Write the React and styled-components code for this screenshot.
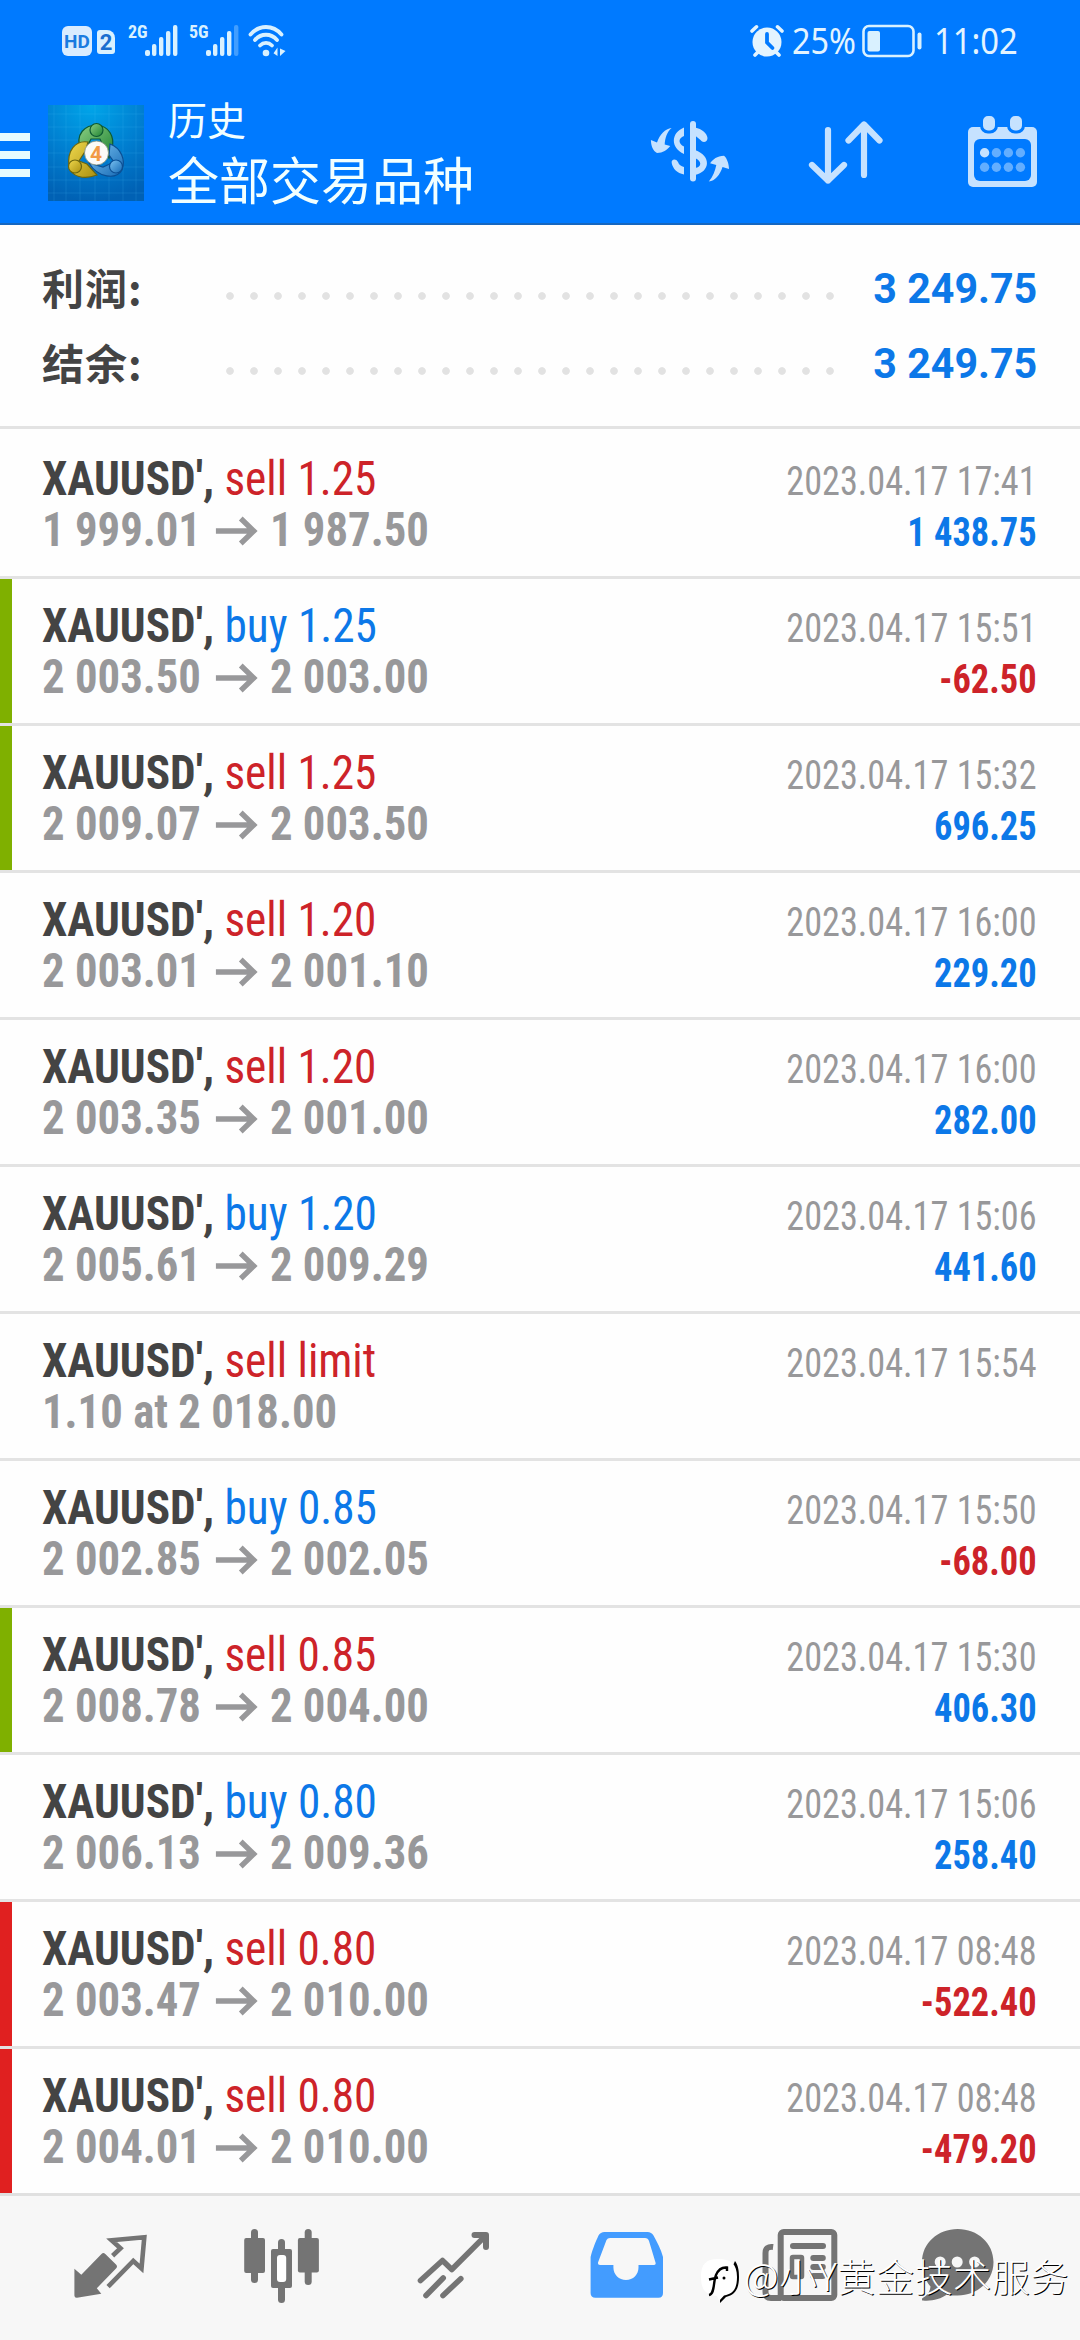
import React, { Fragment } from "react"
import styled, { createGlobalStyle } from "styled-components"

const blue = "#0c78e8"
const red = "#cd2329"

const deals = [
  { side: "sell", size: "1.25", from: "1 999.01", to: "1 987.50", time: "2023.04.17 17:41", profit: "1 438.75" },
  { side: "buy", size: "1.25", from: "2 003.50", to: "2 003.00", time: "2023.04.17 15:51", profit: "-62.50", mark: "#7fb000" },
  { side: "sell", size: "1.25", from: "2 009.07", to: "2 003.50", time: "2023.04.17 15:32", profit: "696.25", mark: "#7fb000" },
  { side: "sell", size: "1.20", from: "2 003.01", to: "2 001.10", time: "2023.04.17 16:00", profit: "229.20" },
  { side: "sell", size: "1.20", from: "2 003.35", to: "2 001.00", time: "2023.04.17 16:00", profit: "282.00" },
  { side: "buy", size: "1.20", from: "2 005.61", to: "2 009.29", time: "2023.04.17 15:06", profit: "441.60" },
  { side: "sell", size: "limit", order: "1.10 at 2 018.00", time: "2023.04.17 15:54" },
  { side: "buy", size: "0.85", from: "2 002.85", to: "2 002.05", time: "2023.04.17 15:50", profit: "-68.00" },
  { side: "sell", size: "0.85", from: "2 008.78", to: "2 004.00", time: "2023.04.17 15:30", profit: "406.30", mark: "#7fb000" },
  { side: "buy", size: "0.80", from: "2 006.13", to: "2 009.36", time: "2023.04.17 15:06", profit: "258.40" },
  { side: "sell", size: "0.80", from: "2 003.47", to: "2 010.00", time: "2023.04.17 08:48", profit: "-522.40", mark: "#e02020" },
  { side: "sell", size: "0.80", from: "2 004.01", to: "2 010.00", time: "2023.04.17 08:48", profit: "-479.20", mark: "#e02020" },
]

const totals = [
  { label: "利润:", value: "3 249.75" },
  { label: "结余:", value: "3 249.75" },
]

const SignalBars = ({ weak }) => (
  <svg width="34" height="32" viewBox="0 0 34 32" fill="#d9f1ff">
    <rect x="0" y="25" width="5" height="6" rx="2" />
    <rect x="7" y="19" width="4.4" height="12" rx="2" />
    <rect x="14" y="12" width="4.4" height="19" rx="2" />
    <rect x="21" y="6" width="4.4" height="25" rx="2" />
    <rect x="28" y="0" width="4.4" height="31" rx="2" opacity={weak ? 0.3 : 1} />
  </svg>
)

const WifiIcon = () => (
  <svg width="40" height="32" viewBox="0 0 40 32" fill="none" stroke="#d9f1ff" strokeWidth="3.8" strokeLinecap="round">
    <path d="M2.5 9.5C11-.5 25-.5 33.5 9.5" />
    <path d="M7 15C13 8 23 8 29 15" />
    <path d="M12 20.500C15.500 17 20.500 17 24 20.500" />
    <circle cx="18" cy="28" r="3.3" fill="#d9f1ff" stroke="none" />
    <path d="M29.500 22.500V31L25.500 28.200zM32 31V23.500L37.500 26z" fill="#d9f1ff" stroke="none" />
  </svg>
)

const AlarmIcon = () => (
  <svg width="34" height="34" viewBox="0 0 34 34" fill="none" strokeLinecap="round">
    <circle cx="17" cy="18" r="14.500" fill="#e3f4ff" />
    <path d="M2 7L6.500 2.800M32 7L27.500 2.800M5 31L8 28M29 31L26 28" stroke="#e3f4ff" strokeWidth="3.600" />
    <path d="M17 10V18.500L22.500 24" stroke="#007aff" strokeWidth="3.800" />
  </svg>
)

const BatteryIcon = () => (
  <svg width="60" height="34" viewBox="0 0 60 34" fill="#d9f1ff">
    <rect x="1.500" y="2" width="50" height="30" rx="5.500" fill="none" stroke="#d9f1ff" strokeWidth="2.600" />
    <rect x="5.500" y="7" width="12.500" height="20.500" rx="2" />
    <rect x="55.500" y="8.500" width="4" height="17" rx="2" />
  </svg>
)

// MetaTrader style badge: three little figures round a numbered disc
const AppLogo = () => (
  <Logo width="96" height="96" viewBox="0 0 96 96">
    <defs>
      <radialGradient id="sky" cx="0.450" cy="0" r="1">
        <stop offset="0" stopColor="#00a6ea" />
        <stop offset="0.550" stopColor="#007ed0" />
        <stop offset="1" stopColor="#0061b4" />
      </radialGradient>
      <linearGradient id="green" x1="0" y1="0" x2="1" y2="1">
        <stop offset="0" stopColor="#8ccf83" />
        <stop offset="1" stopColor="#1d8232" />
      </linearGradient>
      <linearGradient id="gold" x1="0" y1="0" x2="1" y2="1">
        <stop offset="0" stopColor="#f0d94e" />
        <stop offset="1" stopColor="#a98f10" />
      </linearGradient>
      <linearGradient id="water" x1="0" y1="0" x2="1" y2="1">
        <stop offset="0" stopColor="#7cc4f2" />
        <stop offset="1" stopColor="#1468b4" />
      </linearGradient>
    </defs>
    <rect width="96" height="96" fill="url(#sky)" />
    <path
      d="M6 0V96M18 0V96M32 0V96M47 0V96M61 0V96M75 0V96M88 0V96M0 9H96M0 22H96M0 35H96M0 48H96M0 62H96M0 75H96M0 88H96"
      stroke="#5ac8ff"
      strokeOpacity="0.150"
    />
    <g strokeWidth="1.200">
      <path d="M33 46C26 28 38 20 49 20C61 21 67 32 64 43L61 53L52 34H43L36 47z" fill="url(#green)" stroke="#0e5a33" />
      <path d="M40 37C27 35 19 46 21 61C23 72 36 75 49 70L39 59L31 56L38 45z" fill="url(#gold)" stroke="#69650f" />
      <path d="M62 39C73 43 78 55 74 65C68 75 50 73 41 58L55 62L66 57L61 50z" fill="url(#water)" stroke="#0b4f94" />
      <circle cx="48.500" cy="25" r="6.500" fill="url(#green)" stroke="#0e5a33" />
      <circle cx="27" cy="61.500" r="6.500" fill="url(#gold)" stroke="#69650f" />
      <circle cx="68" cy="61.500" r="6.500" fill="url(#water)" stroke="#0b4f94" />
      <circle cx="48.500" cy="48" r="12" fill="#fbfbf8" stroke="#7e8d7a" strokeWidth="0.800" />
    </g>
    <text x="48" y="55.500" fontFamily="Roboto, sans-serif" fontWeight="700" fontSize="21" fill="#f29a45" textAnchor="middle">
      4
    </text>
  </Logo>
)

const CurrencyIcon = () => (
  <svg width="90" height="90" viewBox="0 0 90 90" fill="#c6e2ff">
    <rect x="45" y="14" width="6" height="60.500" rx="3" />
    <path d="M39 20.500V29C33 31 33 37 39 39.500V47C25.500 41 25.500 26 39 20.500z" />
    <path d="M50 20.500C57 22 62 26 62.500 31C62.500 35.500 57.500 36 55.500 33L50 28.500z" />
    <path d="M50 43C67 49 65 65 50 68V61C57 60 57 54 50 51z" />
    <path d="M26.700 56C26 52 31 51 33 55C34 58 36 59 39 60V67.500C32 66 28 62 26.700 56z" />
    <path d="M26.600 21C22 25 20 31 19.700 37.500L25.200 39C22 43 18 46 12 46C8 44 6 39 5.900 33L12 35.500C15 27 20 22 26.600 21z" />
    <path d="M63.800 74.500C68 70 70 64 71.300 58L65.100 56.300C68 52 72 49 79 48.700C82 51 84 57 84 62L77.500 60C75 68 70 74 63.800 74.500z" />
  </svg>
)

const SortIcon = () => (
  <svg width="90" height="90" viewBox="0 0 90 90" fill="none" stroke="#c6e2ff" strokeWidth="6.200" strokeLinecap="round" strokeLinejoin="round">
    <path d="M27 23V73.500M11 58L27 73.500L43 58" />
    <path d="M63 68V17.500M47.500 33.500L63 17.500L78.500 33.500" />
  </svg>
)

const CalendarIcon = () => (
  <svg width="90" height="90" viewBox="0 0 90 90" fill="#c6e2ff">
    <rect x="11" y="20" width="69" height="60" rx="5" />
    <rect x="17" y="32" width="57" height="42" rx="6" fill="#007aff" />
    <rect x="24.500" y="7.500" width="15" height="17.500" rx="6.500" stroke="#007aff" strokeWidth="3" />
    <rect x="51.500" y="7.500" width="15" height="17.500" rx="6.500" stroke="#007aff" strokeWidth="3" />
    {[45.7, 60.3].map(cy =>
      [27.6, 39.4, 51.4, 63.4].map((cx, i) => (
        <circle key={`${cx}-${cy}`} cx={cx} cy={cy} r="4.700" opacity={i === 0 && cy < 50 ? 1 : 0.5} />
      ))
    )}
  </svg>
)

const ArrowIcon = () => (
  <Arrow width="46" height="30" viewBox="0 0 43 30" preserveAspectRatio="none" fill="none" stroke="#98989a" strokeWidth="5.400">
    <path d="M0.500 15H38M25.500 2.500L38.500 15L25.500 27.500" />
  </Arrow>
)

const QuotesIcon = () => (
  <svg width="96" height="96" viewBox="0 0 96 96">
    <path
      d="M12.400 48.700L19.300 54.700L39.500 34Q41.300 32 43.300 34L54 44.500Q56 46.500 54 48.500L34.800 68.300L39.300 73.700L15 77.800Q12.400 78 12.400 75.500z"
      fill="#747474"
    />
    <path
      d="M50.600 35.700L58.500 28.300L49.600 20.300L82.300 17.300L79.500 48.500L71.300 41L46.100 66.700"
      fill="none"
      stroke="#747474"
      strokeWidth="4.600"
    />
  </svg>
)

const ChartIcon = () => (
  <svg width="96" height="96" viewBox="0 0 96 96" fill="#747474">
    <rect x="17" y="9" width="7" height="54" rx="3.500" />
    <rect x="10.200" y="18" width="20.800" height="35" rx="2" />
    <rect x="44" y="19" width="7" height="64" rx="3.500" />
    <rect x="37" y="29" width="21" height="39" rx="2" />
    <rect x="43" y="35" width="9.200" height="27" rx="3" fill="#fff" />
    <rect x="70.700" y="9" width="7" height="56" rx="3.500" />
    <rect x="63.900" y="18" width="21" height="34.500" rx="2" />
  </svg>
)

const TradeIcon = () => (
  <svg width="96" height="96" viewBox="0 0 96 96" fill="none" stroke="#747474" strokeWidth="5.600" strokeLinecap="round" strokeLinejoin="round">
    <path d="M14.500 60.500L36.500 40.500L45.800 49.500L79.500 15.700" />
    <path d="M68.500 15H80V27" strokeWidth="6" />
    <path d="M37.200 58L20 75.500M54.800 58.700L37 75.500" />
  </svg>
)

const HistoryIcon = () => (
  <svg width="96" height="96" viewBox="0 0 96 96">
    <path
      fill="#439cff"
      fillRule="evenodd"
      d="M12.600 37C14.500 29 18 21 20.500 15.500Q22.500 12 26.500 12H69.500Q73.500 12 75.500 15.500C79 22 83 29 85 37V73Q85 77.800 80.500 77.800H17.500Q12.600 77.800 12.600 73z
        M32 18Q29.500 18 28.500 20L20 42.500Q19.500 45 22 45H35.400V47.500C35.400 54.500 41 60 48 60C55 60 60.500 54.500 60.500 47.500V45H75.500Q78.300 45 77.500 42.500L71 21Q70 18 67 18z"
    />
  </svg>
)

const NewsIcon = () => (
  <svg width="96" height="96" viewBox="0 0 96 96" fill="#747474">
    <rect x="30.700" y="12" width="53.600" height="66" rx="3" fill="none" stroke="#747474" strokeWidth="6" />
    <path d="M23.100 27Q15.500 26 15.500 33V72Q15.500 78 21 78H31" fill="none" stroke="#747474" strokeWidth="6" />
    <rect x="40" y="23" width="36" height="6" rx="3" />
    <rect x="42" y="37" width="10" height="20" rx="1" fill="none" stroke="#747474" strokeWidth="4.500" />
    <rect x="60.300" y="35" width="15.500" height="6" rx="3" />
    <rect x="60.300" y="44" width="15.500" height="6" rx="3" />
    <rect x="60.300" y="53" width="15.500" height="6" rx="3" />
  </svg>
)

const ChatIcon = () => (
  <svg width="96" height="96" viewBox="0 0 96 96" fill="#747474">
    <path d="M35.700 9C55.500 9 71.500 23 71.500 42C71.500 61 55.500 75.500 35.700 75.500C31 75.500 28 75.500 25 74.500C19 79 9 81.500 1 80.500C-1.500 80 0 78.500 1.500 77.500C6 75 8 71 8.500 66.500C3 60 0 51 0 42C0 23 16 9 35.700 9z" />
    <g fill="#f7f7f7">
      <circle cx="18.200" cy="42" r="5.500" />
      <circle cx="35.200" cy="42" r="5.500" />
      <circle cx="52.600" cy="42" r="5.500" />
    </g>
  </svg>
)

const tabs = [QuotesIcon, ChartIcon, TradeIcon, HistoryIcon, NewsIcon, ChatIcon]

const App = () => (
  <Fragment>
    <GlobalStyle />
    <Screen>
      <StatusBar>
        <HdBadge>HD</HdBadge>
        <SimBadge>2</SimBadge>
        <Network>2G</Network>
        <SignalBars />
        <Network $second>5G</Network>
        <SignalBars weak />
        <WifiSlot>
          <WifiIcon />
        </WifiSlot>
        <StatusRight>
          <AlarmIcon />
          <Percent>25%</Percent>
          <BatteryIcon />
          <Clock>11:02</Clock>
        </StatusRight>
      </StatusBar>

      <AppBar>
        <MenuButton>
          <i />
          <i />
          <i />
        </MenuButton>
        <AppLogo />
        <Titles>
          <Title>历史</Title>
          <Subtitle>全部交易品种</Subtitle>
        </Titles>
        <Actions>
          <CurrencyIcon />
          <SortIcon />
          <CalendarIcon />
        </Actions>
      </AppBar>

      <Summary>
        {totals.map(t => (
          <Total key={t.label}>
            <TotalLabel>{t.label}</TotalLabel>
            <Dots />
            <TotalValue>{t.value}</TotalValue>
          </Total>
        ))}
      </Summary>

      <main>
        {deals.map((d, i) => (
          <Deal key={i}>
            <Mark $color={d.mark} />
            <Order>
              <Name>
                XAUUSD&#39;, <Side $buy={d.side === "buy"}>{d.side} {d.size}</Side>
              </Name>
              <Prices>
                {d.order || (
                  <Fragment>
                    {d.from}
                    <ArrowIcon />
                    {d.to}
                  </Fragment>
                )}
              </Prices>
            </Order>
            <Result>
              <Time>{d.time}</Time>
              {d.profit && <Profit $loss={d.profit[0] === "-"}>{d.profit}</Profit>}
            </Result>
          </Deal>
        ))}
      </main>

      <TabBar>
        {tabs.map((Icon, i) => (
          <Icon key={i} />
        ))}
        <Watermark>
          <svg width="44" height="46" viewBox="0 0 44 46">
            <path d="M35 3C38 7 39 12 39 19C39 31 35 37 26 39L20 45V37z" fill="#000" />
            <path d="M18 1C31 1 37 6 37 19C37 31 33 36 24 37.500L19 43L17 38C6 37 1 32 1 19C1 6 6 1 18 1z" fill="#fff" />
            <path d="M9 37C15 36 13 24 16 17C18.500 11 22 9 27 9.500V13M9 21.500L18 19.500" fill="none" stroke="#000" strokeWidth="2.400" />
            <circle cx="24" cy="20" r="1.500" />
          </svg>
          <span>@小Y黄金技术服务</span>
        </Watermark>
      </TabBar>
    </Screen>
  </Fragment>
)

export default App

const GlobalStyle = createGlobalStyle`
  body {
    margin: 0;
    background: #fefefe;
  }
  svg {
    display: block;
    flex: none;
  }
`
const Screen = styled.div`
  width: 1080px;
  height: 2340px;
  overflow: hidden;
  display: flex;
  flex-direction: column;
  background: #fefefe;
  font-family: "Roboto Condensed", Roboto, "Noto Sans CJK SC", sans-serif;
`
const StatusBar = styled.div`
  height: 81px;
  box-sizing: border-box;
  padding: 0 63px 0 62px;
  display: flex;
  align-items: center;
  background: #007aff;
  color: #d9f1ff;
`
const HdBadge = styled.span`
  width: 30px;
  height: 30px;
  border-radius: 6px;
  background: #d9ecff;
  color: #1a7be0;
  font: 700 19px/31px Roboto, sans-serif;
  text-align: center;
`
const SimBadge = styled.span`
  width: 18px;
  height: 24px;
  margin: 2px 13px 0 5px;
  border-radius: 3px 8px 3px 3px;
  background: #d9f1ff;
  color: #1a6fd0;
  font: 700 22px/25px Roboto, sans-serif;
  text-align: center;
`
const Network = styled.span`
  width: 17px;
  margin: 0 0 17px ${p => (p.$second ? 10 : 0)}px;
  font: 700 18px/18px "Roboto Condensed", Roboto, sans-serif;
  font-stretch: 75%;
`
const WifiSlot = styled.span`
  margin-left: 8px;
`
const StatusRight = styled.div`
  margin-left: auto;
  display: flex;
  align-items: center;
  color: #e3f4ff;
  font: 400 36px/40px "Noto Sans", sans-serif;
`
const Percent = styled.span`
  width: 70px;
  margin-left: 8px;
  transform: scaleX(0.9);
  transform-origin: left;
`
const Clock = styled.span`
  width: 83px;
  margin-left: 12px;
  transform: scaleX(0.91);
  transform-origin: left;
`
const AppBar = styled.header`
  height: 144px;
  box-sizing: border-box;
  padding-right: 33px;
  display: flex;
  align-items: center;
  background: #007aff;
  border-bottom: 2px solid #1667c0;
`
const MenuButton = styled.div`
  width: 30px;
  margin: 6px 18px 0 0;
  display: grid;
  gap: 10px;
  i {
    height: 8px;
    background: #e6fbff;
  }
`
const Logo = styled.svg`
  margin-top: 2px;
`
const Titles = styled.div`
  margin: -5px 0 0 24px;
  color: #f2ffff;
  font-family: "Noto Sans CJK SC", sans-serif;
`
const Title = styled.div`
  font-size: 39px;
  line-height: 56px;
`
const Subtitle = styled.div`
  font-size: 51px;
  line-height: 64px;
`
const Actions = styled.div`
  margin-left: auto;
  display: flex;
  gap: 66px;
`
const Summary = styled.section`
  height: 204px;
  box-sizing: border-box;
  padding: 26px 43px 0 42px;
  border-bottom: 3px solid #e3e3e3;
`
const Total = styled.div`
  height: 75px;
  display: flex;
  align-items: center;
`
const TotalLabel = styled.span`
  width: 176px;
  margin-top: -4px;
  font: 700 42px/71px "Noto Sans CJK SC", sans-serif;
  letter-spacing: 1px;
  color: #444;
`
const Dots = styled.span`
  width: 624px;
  height: 24px;
  margin-top: 15px;
  background: radial-gradient(circle at 12px 12px, #e2e2e2 3.4px, transparent 4.2px) 0 0 / 24px 24px;
`
const TotalValue = styled.span`
  margin-left: auto;
  font: 700 42px/75px Roboto, sans-serif;
  color: ${blue};
  transform: scaleX(0.98);
  transform-origin: right;
`
const Deal = styled.article`
  height: 147px;
  box-sizing: border-box;
  padding-right: 43px;
  display: flex;
  border-top: 3px solid #e3e3e3;
  font-stretch: 75%;
  white-space: nowrap;
  &:first-child {
    border-top-color: transparent;
  }
`
const Mark = styled.div`
  width: 12px;
  background: ${p => p.$color || "transparent"};
`
const Order = styled.div`
  flex: 1;
  padding: 21px 0 0 30px;
  font-size: 48px;
  line-height: 51px;
  font-weight: 700;
`
const Name = styled.div`
  color: #444;
  transform: scaleX(0.943);
  transform-origin: left;
`
const Side = styled.span`
  font-weight: 400;
  color: ${p => (p.$buy ? blue : red)};
`
const Prices = styled.div`
  display: flex;
  align-items: center;
  color: #98989a;
  transform: scaleX(0.932);
  transform-origin: left;
`
const Arrow = styled.svg`
  margin: 2px 13px 0 15px;
`
const Result = styled.div`
  padding-top: 24px;
  text-align: right;
  font-size: 40px;
  line-height: 51px;
`
const Time = styled.div`
  color: #98989a;
  transform: scaleX(0.905);
  transform-origin: right;
`
const Profit = styled.div`
  font-weight: 700;
  color: ${p => (p.$loss ? red : blue)};
  transform: scaleX(0.91);
  transform-origin: right;
`
const TabBar = styled.nav`
  position: relative;
  height: 147px;
  box-sizing: border-box;
  padding: 0 62px;
  display: flex;
  align-items: center;
  justify-content: space-between;
  border-top: 3px solid #e0e0e0;
  background: #f7f7f7;
`
const Watermark = styled.div`
  position: absolute;
  left: 700px;
  bottom: 36px;
  display: flex;
  align-items: center;
  color: #fff;
  font: 300 38px/44px "Noto Sans CJK SC", sans-serif;
  letter-spacing: 0.6px;
  text-shadow: 1px 1px 0 #000;
  white-space: nowrap;
  span {
    margin-top: -12px;
  }
`
